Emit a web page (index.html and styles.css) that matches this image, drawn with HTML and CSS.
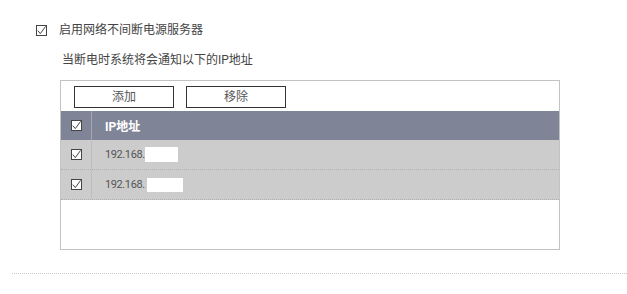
FILE: index.html
```html
<!DOCTYPE html>
<html lang="zh">
<head>
<meta charset="utf-8">
<link rel="stylesheet" href="styles.css">
</head>
<body>
<div class="page">
  <label class="enable-row">
    <span class="cb"><svg viewBox="0 0 11 11" width="11" height="11"><polyline points="1.8,5.6 4.3,8.6 9.6,1.4" fill="none" stroke="#444" stroke-width="1"/></svg></span>
    <span class="enable-text">启用网络不间断电源服务器</span>
  </label>
  <div class="sub">
    <div class="note">当断电时系统将会通知以下的IP地址</div>
    <div class="box">
      <div class="toolbar">
        <button class="btn">添加</button>
        <button class="btn">移除</button>
      </div>
      <div class="row head">
        <div class="c1"><span class="cb"><svg viewBox="0 0 11 11" width="11" height="11"><polyline points="1.8,5.6 4.3,8.6 9.6,1.4" fill="none" stroke="#444" stroke-width="1"/></svg></span></div>
        <div class="c2">IP地址</div>
      </div>
      <div class="row item">
        <div class="c1"><span class="cb"><svg viewBox="0 0 11 11" width="11" height="11"><polyline points="1.8,5.6 4.3,8.6 9.6,1.4" fill="none" stroke="#444" stroke-width="1"/></svg></span></div>
        <div class="c2">192.168.<span class="mask m1"></span></div>
      </div>
      <div class="row item">
        <div class="c1"><span class="cb"><svg viewBox="0 0 11 11" width="11" height="11"><polyline points="1.8,5.6 4.3,8.6 9.6,1.4" fill="none" stroke="#444" stroke-width="1"/></svg></span></div>
        <div class="c2">192.168.<span class="mask m2"></span></div>
      </div>
    </div>
  </div>
  <div class="divider"></div>
</div>
</body>
</html>
```
FILE: styles.css
```css
html, body {
  margin: 0;
  padding: 0;
  background: #fff;
}
body {
  font-family: Roboto, "Noto Sans CJK SC", sans-serif;
  color: #444;
  font-size: 12px;
}
.page {
  width: 627px;
  height: 294px;
  overflow: hidden;
}
.enable-row {
  display: flex;
  align-items: center;
  gap: 12px;
  padding: 22px 0 0 36px;
  height: 16px;
  line-height: 16px;
}
.cb {
  display: inline-block;
  width: 11px;
  height: 11px;
  box-sizing: border-box;
  border: 1px solid #444;
  background: #fff;
  position: relative;
}
.cb svg {
  display: block;
  position: absolute;
  left: -1px;
  top: -1px;
}
.enable-text {
  font-size: 12px;
  color: #444;
}
.sub {
  margin-left: 60px;
}
.note {
  margin-top: 14px;
  padding-left: 2px;
  line-height: 16px;
  height: 16px;
  color: #444;
}
.box {
  margin-top: 12px;
  width: 500px;
  height: 170px;
  box-sizing: border-box;
  border: 1px solid #c3c3c3;
}
.toolbar {
  height: 30px;
  box-sizing: border-box;
  padding: 5px 0 0 13px;
  display: flex;
  align-items: flex-start;
  gap: 12px;
}
.btn {
  width: 100px;
  height: 22px;
  box-sizing: border-box;
  border: 1px solid #333;
  background: #fff;
  font-family: Roboto, "Noto Sans CJK SC", sans-serif;
  font-size: 12px;
  color: #555;
  padding: 0;
  line-height: 18px;
}
.row {
  display: flex;
  align-items: stretch;
}
.head {
  height: 29px;
  background: #7f8596;
  color: #fff;
  font-weight: bold;
  font-size: 12px;
}
.item {
  height: 30px;
  box-sizing: border-box;
  background: #cccccc;
  border-bottom: 1px dotted #b0b0b0;
  font-size: 11px;
  color: #555;
}
.c1 {
  width: 30px;
  flex: none;
  display: flex;
  align-items: center;
  justify-content: center;
  border-right: 1px solid #bdbdbd;
}
.head .c1 {
  border-right-color: #a3a8b3;
}
.c2 {
  padding-left: 13px;
  display: flex;
  align-items: center;
}
.item .c2 {
  letter-spacing: -0.4px;
}
.mask {
  display: inline-block;
  background: #fff;
}
.m1 {
  width: 33px;
  height: 15px;
  margin-left: 0;
}
.m2 {
  width: 36px;
  height: 14px;
  margin-left: 2px;
}
.divider {
  margin: 23px 0 0 12px;
  border-top: 1px dotted #c8c8c8;
}
```
